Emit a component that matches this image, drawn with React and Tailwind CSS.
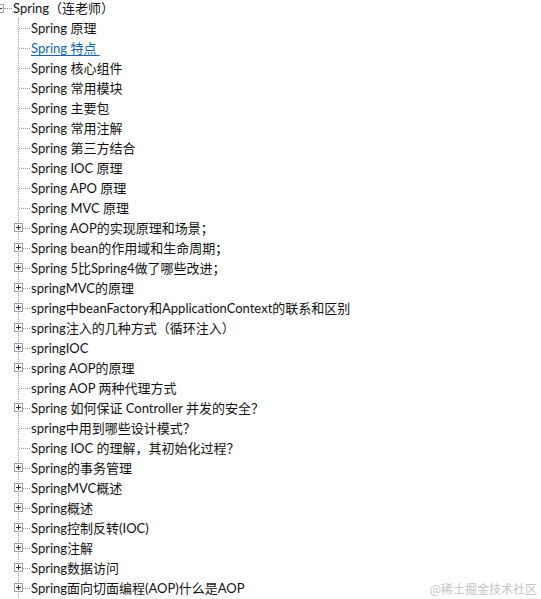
import React from "react";

const children = [
    { label: "Spring 原理" },
    { label: "Spring 特点 ", link: true },
    { label: "Spring 核心组件" },
    { label: "Spring 常用模块" },
    { label: "Spring 主要包" },
    { label: "Spring 常用注解" },
    { label: "Spring 第三方结合" },
    { label: "Spring IOC 原理" },
    { label: "Spring APO 原理" },
    { label: "Spring MVC 原理" },
    { label: "Spring AOP的实现原理和场景；", folder: true },
    { label: "Spring bean的作用域和生命周期；", folder: true },
    { label: "Spring 5比Spring4做了哪些改进；", folder: true },
    { label: "springMVC的原理", folder: true },
    { label: "spring中beanFactory和ApplicationContext的联系和区别", folder: true },
    { label: "spring注入的几种方式（循环注入）", folder: true },
    { label: "springIOC", folder: true },
    { label: "spring AOP的原理", folder: true },
    { label: "spring AOP 两种代理方式" },
    { label: "Spring 如何保证 Controller 并发的安全？", folder: true },
    { label: "spring中用到哪些设计模式？" },
    { label: "Spring IOC 的理解，其初始化过程？" },
    { label: "Spring的事务管理", folder: true },
    { label: "SpringMVC概述", folder: true },
    { label: "Spring概述", folder: true },
    { label: "Spring控制反转(IOC)", folder: true },
    { label: "Spring注解", folder: true },
    { label: "Spring数据访问", folder: true },
    { label: "Spring面向切面编程(AOP)什么是AOP", folder: true },
];

function ToggleBox({ open, className = "" }) {
    return (
        <svg width="9" height="9" viewBox="0 0 9 9" className={className}>
            <rect x="0.5" y="0.5" width="8" height="8" fill="#fff" stroke="#a0a0a0" />
            <line x1="2" y1="4.5" x2="7" y2="4.5" stroke="#333" />
            {!open && <line x1="4.5" y1="2" x2="4.5" y2="7" stroke="#333" />}
        </svg>
    );
}

export default function App() {
    return (
        <div
            className="relative h-screen w-full overflow-hidden bg-white text-[13px] text-[#111]"
            style={{ fontFamily: 'Lato, "Noto Sans CJK SC", sans-serif' }}
        >
            <div className="-mt-[2px]">
                <div className="flex h-5 items-center">
                    <ToggleBox open className="-ml-[5px] shrink-0" />
                    <span className="h-0 w-[8px] border-t border-dotted border-[#a0a0a0]" />
                    <span className="ml-[1px] whitespace-nowrap leading-5">Spring（连老师）</span>
                </div>
                <div className="ml-[18px] border-l border-dotted border-[#a0a0a0]">
                    {children.map((item) => (
                        <div key={item.label} className="relative flex h-5 items-center">
                            <span className="h-0 w-[11px] border-t border-dotted border-[#a0a0a0]" />
                            {item.folder && <ToggleBox className="absolute -left-[5px] top-[5px]" />}
                            <span
                                className={
                                    item.link
                                        ? "ml-[1px] whitespace-pre leading-5 text-[#0b66c3] underline underline-offset-2"
                                        : "ml-[1px] whitespace-pre leading-5"
                                }
                            >
                                {item.label}
                            </span>
                        </div>
                    ))}
                </div>
            </div>
            <div
                className="absolute bottom-[1px] right-[4px] text-[12px] text-[#c4c4c4]"
                style={{ fontFamily: '"Noto Sans CJK SC", sans-serif' }}
            >
                @稀土掘金技术社区
            </div>
        </div>
    );
}
